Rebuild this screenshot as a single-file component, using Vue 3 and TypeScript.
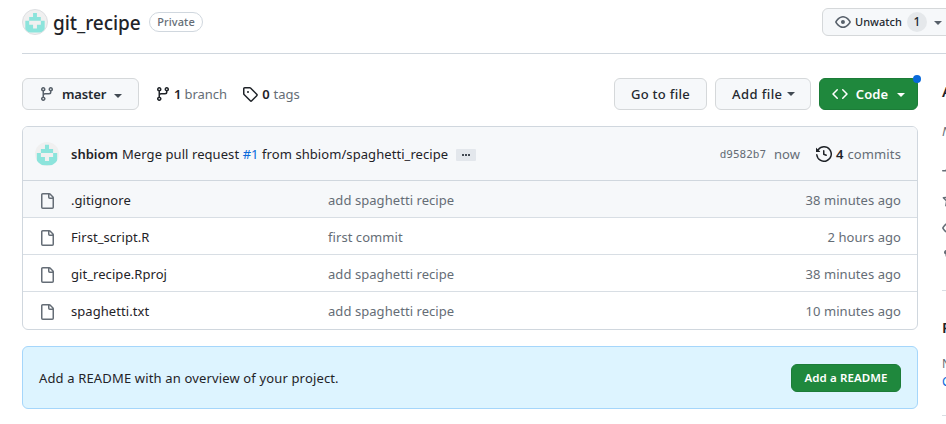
<script setup lang="ts">
interface FileRow {
  name: string
  message: string
  age: string
}

const files: FileRow[] = [
  { name: '.gitignore', message: 'add spaghetti recipe', age: '38 minutes ago' },
  { name: 'First_script.R', message: 'first commit', age: '2 hours ago' },
  { name: 'git_recipe.Rproj', message: 'add spaghetti recipe', age: '38 minutes ago' },
  { name: 'spaghetti.txt', message: 'add spaghetti recipe', age: '10 minutes ago' },
]

const avatar = 'M4 0h2v2h2v2h2v6H0V4h2V2h2zM2 4v2h2v2h2V6h2V4z'
const branch =
  'M9.5 3.25a2.25 2.25 0 1 1 3 2.122V6A2.5 2.5 0 0 1 10 8.5H6a1 1 0 0 0-1 1v1.128a2.251 2.251 0 1 1-1.5 0V5.372a2.25 2.25 0 1 1 1.5 0v1.836A2.493 2.493 0 0 1 6 7h4a1 1 0 0 0 1-1v-.628A2.25 2.25 0 0 1 9.5 3.25Zm-6 0a.75.75 0 1 0 1.5 0 .75.75 0 0 0-1.5 0Zm8.25-.75a.75.75 0 1 0 0 1.5.75.75 0 0 0 0-1.5ZM4.25 12a.75.75 0 1 0 0 1.5.75.75 0 0 0 0-1.5Z'
const tag =
  'M1 7.775V2.75C1 1.784 1.784 1 2.75 1h5.025c.464 0 .91.184 1.238.513l6.25 6.25a1.75 1.75 0 0 1 0 2.474l-5.026 5.026a1.75 1.75 0 0 1-2.474 0l-6.25-6.25A1.752 1.752 0 0 1 1 7.775Zm1.5 0c0 .066.026.13.073.177l6.25 6.25a.25.25 0 0 0 .354 0l5.025-5.025a.25.25 0 0 0 0-.354l-6.25-6.25a.25.25 0 0 0-.177-.073H2.75a.25.25 0 0 0-.25.25ZM6 5a1 1 0 1 1 0 2 1 1 0 0 1 0-2Z'
const eye =
  'M8 2c1.981 0 3.671.992 4.933 2.078 1.27 1.091 2.187 2.345 2.637 3.023a1.62 1.62 0 0 1 0 1.798c-.45.678-1.367 1.932-2.637 3.023C11.67 13.008 9.981 14 8 14c-1.981 0-3.671-.992-4.933-2.078C1.797 10.83.88 9.576.43 8.898a1.62 1.62 0 0 1 0-1.798c.45-.677 1.367-1.931 2.637-3.022C4.33 2.992 6.019 2 8 2ZM1.679 7.932a.12.12 0 0 0 0 .136c.411.622 1.241 1.75 2.366 2.717C5.176 11.758 6.527 12.5 8 12.5c1.473 0 2.825-.742 3.955-1.715 1.124-.967 1.954-2.096 2.366-2.717a.12.12 0 0 0 0-.136c-.412-.621-1.242-1.75-2.366-2.717C10.824 4.242 9.473 3.5 8 3.5c-1.473 0-2.825.742-3.955 1.715-1.124.967-1.954 2.096-2.366 2.717ZM8 10a2 2 0 1 1-.001-3.999A2 2 0 0 1 8 10Z'
const code =
  'm11.28 3.22 4.25 4.25a.75.75 0 0 1 0 1.06l-4.25 4.25a.749.749 0 0 1-1.06-1.06L13.94 8l-3.72-3.72a.749.749 0 0 1 1.06-1.06Zm-6.56 0a.751.751 0 0 1 1.06 1.06L2.06 8l3.72 3.72a.749.749 0 0 1-1.06 1.06L.47 8.53a.75.75 0 0 1 0-1.06Z'
const history =
  'm.427 1.927 1.215 1.215a8.002 8.002 0 1 1-1.6 5.685.75.75 0 1 1 1.493-.154 6.5 6.5 0 1 0 1.18-4.458l1.358 1.358A.25.25 0 0 1 3.896 6H.25A.25.25 0 0 1 0 5.75V2.104a.25.25 0 0 1 .427-.177ZM7.75 4a.75.75 0 0 1 .75.75v2.992l2.028.812a.75.75 0 0 1-.557 1.392l-2.5-1A.751.751 0 0 1 7 8.25v-3.5A.75.75 0 0 1 7.75 4Z'
const file =
  'M2 1.75C2 .784 2.784 0 3.75 0h6.586c.464 0 .909.184 1.237.513l2.914 2.914c.329.328.513.773.513 1.237v9.586A1.75 1.75 0 0 1 13.25 16h-9.5A1.75 1.75 0 0 1 2 14.25Zm1.75-.25a.25.25 0 0 0-.25.25v12.5c0 .138.112.25.25.25h9.5a.25.25 0 0 0 .25-.25V6h-2.75A1.75 1.75 0 0 1 9 4.25V1.5Zm6.75.062V4.25c0 .138.112.25.25.25h2.688l-.011-.013-2.914-2.914-.013-.011Z'
const pulse =
  'M6 2c.306 0 .582.187.696.471L10 10.731l1.304-3.26A.751.751 0 0 1 12 7h3.25a.75.75 0 0 1 0 1.5h-2.742l-1.812 4.528a.751.751 0 0 1-1.392 0L6 4.77 4.696 8.03A.75.75 0 0 1 4 8.5H.75a.75.75 0 0 1 0-1.5h2.742l1.812-4.529A.751.751 0 0 1 6 2Z'
const star =
  'M8 .25a.75.75 0 0 1 .673.418l1.882 3.815 4.21.612a.75.75 0 0 1 .416 1.279l-3.046 2.97.719 4.192a.751.751 0 0 1-1.088.791L8 12.347l-3.766 1.98a.75.75 0 0 1-1.088-.79l.72-4.194L.818 6.374a.75.75 0 0 1 .416-1.28l4.21-.611L7.327.668A.75.75 0 0 1 8 .25Zm0 2.445L6.615 5.5a.75.75 0 0 1-.564.41l-3.097.45 2.24 2.184a.75.75 0 0 1 .216.664l-.528 3.084 2.769-1.456a.75.75 0 0 1 .698 0l2.77 1.456-.53-3.084a.75.75 0 0 1 .216-.664l2.24-2.183-3.096-.45a.75.75 0 0 1-.564-.41Z'
const fork =
  'M5 5.372v.878c0 .414.336.75.75.75h4.5a.75.75 0 0 0 .75-.75v-.878a2.25 2.25 0 1 1 1.5 0v.878a2.25 2.25 0 0 1-2.25 2.25h-1.5v2.128a2.251 2.251 0 1 1-1.5 0V8.5h-1.5A2.25 2.25 0 0 1 3.5 6.25v-.878a2.25 2.25 0 1 1 1.5 0Z'
const sideIcons: string[] = [pulse, star, eye, fork]
</script>

<template>
  <div class="page">
    <header class="repo">
      <svg class="avatar big" viewBox="-1.2 -1.6 12.4 12.4"><path :d="avatar" fill-rule="evenodd" /></svg>
      <h1>git_recipe</h1>
      <span class="private">Private</span>
      <button class="btn watch">
        <svg class="ic" viewBox="0 0 16 16"><path :d="eye" /></svg>
        <span class="t-watch">Unwatch</span>
        <span class="count">1</span>
        <i class="caret" />
      </button>
    </header>

    <div class="columns">
      <main>
        <div class="toolbar">
          <button class="btn master">
            <svg class="ic" viewBox="0 0 16 16"><path :d="branch" /></svg>
            <b>master</b><i class="caret" />
          </button>
          <a class="stat s-branch">
            <svg class="ic" viewBox="0 0 16 16"><path :d="branch" /></svg>
            <b>1</b><span>branch</span>
          </a>
          <a class="stat s-tag">
            <svg class="ic" viewBox="0 0 16 16"><path :d="tag" /></svg>
            <b>0</b><span>tags</span>
          </a>
          <button class="btn goto">Go to file</button>
          <button class="btn add">Add file<i class="caret" /></button>
          <button class="btn green code">
            <svg class="ic" viewBox="0 0 16 16"><path :d="code" /></svg>
            <b>Code</b><i class="caret" /><i class="dot" />
          </button>
        </div>

        <section class="box">
          <div class="commit">
            <svg class="avatar small" viewBox="-0.9 -1.4 11.8 11.8"><path :d="avatar" fill-rule="evenodd" /></svg>
            <b class="author">shbiom</b>
            <span class="msg">Merge pull request <a>#1</a> from shbiom/spaghetti_recipe</span>
            <span class="more"><i /><i /><i /></span>
            <code>d9582b7</code>
            <span class="now">now</span>
            <svg class="ic hist" viewBox="0 0 16 16"><path :d="history" /></svg>
            <b class="num">4</b><span class="commits">commits</span>
          </div>
          <div v-for="f in files" :key="f.name" class="row">
            <svg class="ic" viewBox="0 0 16 16"><path :d="file" /></svg>
            <span class="name">{{ f.name }}</span>
            <span class="message">{{ f.message }}</span>
            <span class="age">{{ f.age }}</span>
          </div>
        </section>

        <section class="notice">
          <span>Add a README with an overview of your project.</span>
          <button class="btn green readme">Add a README</button>
        </section>
      </main>

      <aside>
        <h2>About</h2>
        <p class="desc">No description</p>
        <ul>
          <li v-for="(d, i) in sideIcons" :key="i">
            <svg class="ic" viewBox="0 0 16 16"><path :d="d" /></svg>
          </li>
        </ul>
        <h2 class="releases">Releases</h2>
        <p class="none">No releases</p>
        <a class="create">Create a new release</a>
        <hr />
      </aside>
    </div>
  </div>
</template>

<style>
body { margin: 0; overflow: hidden; background: #fff; }
</style>

<style scoped>
* { box-sizing: border-box; }
.page {
  width: 946px; height: 424px; overflow: hidden; padding-left: 22px;
  font-family: "Noto Sans", "Open Sans", sans-serif;
  font-size: 13px; line-height: 20px; color: #1f2328; white-space: nowrap;
}
.ic { width: 16px; height: 16px; flex: none; fill: currentColor; }
b { font-weight: 600; }
.caret {
  flex: none; border: 4px solid transparent; border-top-color: currentColor;
  border-bottom: 0; width: 8px; height: 4px;
}
.avatar { flex: none; border-radius: 50%; background: #f0f0f0; fill: #8ce4dc; }
.big { width: 26px; height: 26px; border: 1px solid #dddfe2; margin-top: -1px; }
.small { width: 24px; height: 24px; }

.repo { height: 54px; border-bottom: 1px solid #d0d7de; display: flex; align-items: center; padding-bottom: 9px; }
h1 { font-size: 19px; line-height: 28px; font-weight: 500; margin: 1px 0 0 5px; width: 90px; letter-spacing: -0.05px; }
.private {
  margin-left: 6px; width: 54px; height: 20px; line-height: 18px; text-align: center;
  border: 1px solid #d0d7de; border-radius: 10px; font-size: 11px; font-weight: 500; color: #656d76; letter-spacing: 0.1px;
}
.btn {
  font: inherit; font-weight: 500; color: #24292f; background: #f6f8fa; border: 1px solid #d5d8da;
  border-radius: 6px; display: flex; align-items: center; padding: 0; flex: none;
}
.watch { margin-left: auto; width: 130px; height: 28px; margin-right: -6px; padding-left: 12px; font-size: 11px; border-color: #d5d8da; }
.watch .ic { color: #57606a; }
.t-watch { margin-left: 2px; width: 51px; letter-spacing: 0.05px; }
.count { margin-left: 3px; width: 20px; height: 20px; line-height: 20px; border-radius: 10px; background: #e5e8eb; text-align: center; font-size: 12px; }
.watch .caret { margin-left: 7px; margin-top: 2px; }

.columns { display: flex; }
main { width: 896px; flex: none; }
.toolbar { display: flex; align-items: center; margin-top: 24px; height: 32px; }
.toolbar .btn { height: 32px; }
.master { width: 117px; padding-left: 16px; }
.master .ic, .btn .caret { color: #57606a; }
.master .caret, .add .caret { color: #424a53; }
.master b { margin-left: 7px; width: 44px; letter-spacing: -0.15px; }
.master .caret { margin-left: 8px; margin-top: 3px; }
.stat { display: flex; align-items: center; margin-top: -1px; }
.stat span { color: #656d76; margin-left: 3px; }
.s-branch { margin-left: 16px; }
.s-branch b { margin-left: 3px; }
.s-tag { margin-left: 15px; }
.s-tag b { margin-left: 4px; }
.s-tag span { margin-left: 4px; }
.goto { width: 93px; justify-content: center; margin-left: auto; letter-spacing: 0.3px; }
.add { width: 96px; margin-left: 8px; padding-left: 16px; letter-spacing: 0.42px; }
.add .caret { margin-left: 4px; }
.green { background: #1f883d; color: #fff; border-color: #1c7c38; font-weight: 600; }
.code { width: 99px; margin-left: 8px; padding-left: 12px; position: relative; }
.code b { margin-left: 7px; width: 34px; letter-spacing: 0.1px; }
.code .caret { color: #fff; margin-left: 8px; margin-top: 2px; }
.dot { position: absolute; right: -4px; top: -4px; width: 8px; height: 8px; border-radius: 50%; background: #0969da; }

.box { margin-top: 16px; border: 1px solid #d0d7de; border-radius: 6px; height: 204px; overflow: hidden; }
.commit { height: 54px; background: #f6f8fa; border-bottom: 1px solid #d0d7de; display: flex; align-items: center; padding: 0 16px 0 12px; }
.author { margin-left: 12px; width: 51px; }
a { color: inherit; }
.msg { letter-spacing: 0.07px; }
.msg a { color: #0969da; }
.more { width: 20px; height: 12px; margin-left: 8px; margin-top: 2px; background: #e3e7ec; border-radius: 1px; display: flex; align-items: center; justify-content: center; gap: 1px; }
.more i { width: 2px; height: 2px; background: #424a53; }
code { margin-left: auto; font: 11px/20px "DejaVu Sans Mono", monospace; color: #656d76; margin-top: 2px; }
.now { margin-left: 8px; width: 26px; color: #656d76; }
.hist { margin-left: 16px; margin-top: 1px; }
.num { margin-left: 4px; }
.commits { margin-left: 4px; color: #656d76; letter-spacing: 0.12px; }
.row { height: 37px; display: flex; align-items: center; padding: 2px 16px 0; border-bottom: 1px solid #d8dee4; letter-spacing: 0.06px; }
.row:last-child { border-bottom: 0; padding-top: 0; }
.row:nth-child(2) { background: #f6f8fa; }
.row .ic { color: #656d76; margin-top: 2px; }
.name { margin-left: 16px; width: 257px; }
.row .message, .row .age { color: #656d76; }
.age { margin-left: auto; }

.notice { margin-top: 16px; height: 63px; border: 1px solid #a5d6fb; background: #ddf4ff; border-radius: 6px; display: flex; align-items: center; justify-content: space-between; padding: 0 16px; letter-spacing: 0.15px; }
.readme { width: 110px; height: 28px; justify-content: center; font-size: 11.5px; letter-spacing: 0.1px; }

aside { width: 296px; flex: none; margin-left: 24px; padding-top: 26px; }
h2 { margin: 0; font-size: 15px; line-height: 22px; font-weight: 600; }
.desc { margin: 19px 0 0; font-style: italic; color: #656d76; line-height: 20px; }
ul { list-style: none; margin: 16px 0 0; padding: 0; height: 134px; border-bottom: 1px solid #d8dee4; color: #656d76; }
li { height: 28.5px; display: flex; align-items: center; }
.releases { margin-top: 25px; }
.none { margin: 17px 0 0; font-size: 12px; line-height: 18px; color: #656d76; }
.create { display: block; font-size: 12px; line-height: 18px; color: #0969da; }
hr { margin: 24px 0 0; border: 0; border-top: 1px solid #d8dee4; }
</style>
